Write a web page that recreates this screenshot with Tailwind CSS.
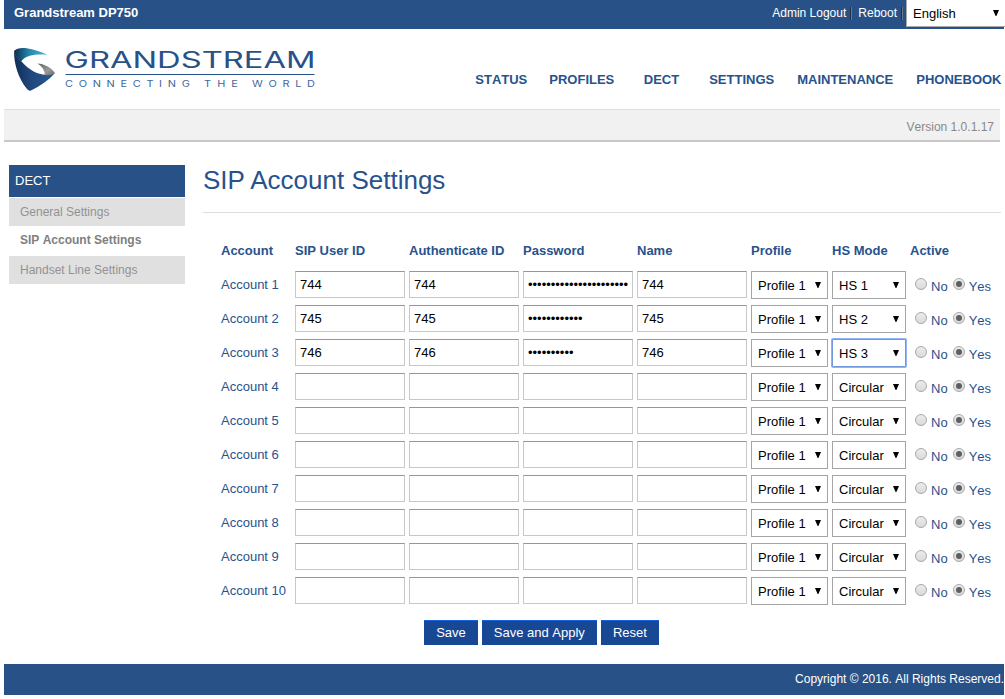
<!DOCTYPE html>
<html lang="en">
<head>
  <meta charset="UTF-8">
  <meta name="viewport" content="width=device-width, initial-scale=1.0">
  <title>Grandstream DP750</title>
  <script src="https://cdn.jsdelivr.net/npm/@tailwindcss/browser@4"></script>
</head>
<body class="bg-white font-['Liberation_Sans',Arial,sans-serif] [font-kerning:none] text-[13px] leading-4 text-[#28528c] overflow-hidden">
  <div class="ml-1 w-[1001px]">

    <!-- top bar -->
    <div class="bg-[#285287] text-white h-[29px] w-[1000px] flex items-start">
      <b class="ml-[10px] mt-[5px]">Grandstream DP750</b>
      <div class="ml-auto flex text-xs mt-[5px]">
        <a href="#">Admin Logout</a>
        <span class="w-[2px] h-[13px] mt-[2px] ml-1 mr-[6px] bg-[#22303f] border-r border-[#6f7780]"></span>
        <a href="#">Reboot</a>
        <span class="w-[2px] h-[13px] mt-[2px] ml-1 mr-[3px] bg-[#22303f] border-r border-[#6f7780]"></span>
      </div>
      <div class="relative shrink-0 w-[100px] h-[27px] -mr-[2px]">
        <select class="appearance-none block w-full h-full bg-white text-black border border-t-0 border-[#a9a9a9] pl-[6px] pt-px pb-0">
          <option>English</option>
        </select>
        <svg class="absolute right-[7px] top-[10px] w-[6px] h-[6px]" viewBox="0 0 6 6"><path d="M0 0h6L3.400 6H2.600z"/></svg>
      </div>
    </div>

    <!-- logo + menu -->
    <div class="h-20 flex items-start">
      <svg class="ml-[10px] mt-[17px] shrink-0" width="304" height="48" viewBox="14 46 304 48">
        <defs>
          <linearGradient id="top" x1="0" x2="1" y1="0" y2="0">
            <stop offset="0" stop-color="#0b2a4c"/><stop offset=".45" stop-color="#2787ae"/><stop offset="1" stop-color="#4ab4d8"/>
          </linearGradient>
          <linearGradient id="low" x1="0" x2="1" y1="0" y2="0">
            <stop offset="0" stop-color="#112e57"/><stop offset=".4" stop-color="#20477b"/><stop offset="1" stop-color="#285a94"/>
          </linearGradient>
          <linearGradient id="grey" x1="0" x2="1" y1="0" y2="1">
            <stop offset="0" stop-color="#5f5f5f"/><stop offset=".6" stop-color="#9b9b9b"/><stop offset="1" stop-color="#666"/>
          </linearGradient>
        </defs>
        <path fill="url(#low)" d="M14 51C15.500 56 18 59 22 62C31 72 43 78 55 73C48 81 40 86 31 90.500Q29 91.500 27 89C18 78 14 64 14 51Z"/>
        <path fill="url(#top)" d="M14 51C17 47 25 47.500 31 49C37 50.500 42 52 47.500 54.700C37 54 25 54.500 21 62C17 58 14.500 55 14 51Z"/>
        <path fill="url(#grey)" d="M37.500 63.500C44 64 51 67 55 73C52 75 49 75.500 45 75C44.500 70 42 66 37.500 63.500Z"/>
        <g fill="#285287" font-family="Inter, sans-serif">
          <text x="64.500" y="68.200" font-size="22.500" textLength="251" lengthAdjust="spacingAndGlyphs">GRANDSTREAM</text>
          <path d="M65.500 74h249v1h-249z"/>
          <g font-size="8.400" fill="#3f679c" transform="scale(1.300 1)">
            <text x="50" y="87" textLength="96">CONNECTING</text>
            <text x="157" y="87" textLength="26">THE</text>
            <text x="193.800" y="87" textLength="48.500">WORLD</text>
          </g>
        </g>
      </svg>
      <nav class="ml-auto mt-[43px] flex font-bold">
        <a href="#" class="mr-[22px]">STATUS</a>
        <a href="#" class="mr-[29.500px]">PROFILES</a>
        <a href="#" class="mr-[30px]">DECT</a>
        <a href="#" class="mr-[23px]">SETTINGS</a>
        <a href="#" class="mr-[23px]">MAINTENANCE</a>
        <a href="#" class="mr-[3.500px]">PHONEBOOK</a>
      </nav>
    </div>

    <div class="w-[996px] h-[33px] bg-[#f1f1f1] border-t border-b-2 border-t-[#dedede] border-b-[#c8c8c8] text-[#888] text-xs leading-4 text-right pt-[9px] pr-[6px]">Version 1.0.1.17</div>

    <div class="flex pl-[5px] h-[522px]">
      <!-- side menu -->
      <div class="w-44 mt-[23px] mr-[18px] shrink-0 text-xs">
        <div class="bg-[#285287] text-white text-[13px] h-8 leading-8 pl-[6px]">DECT</div>
        <a href="#" class="block mt-px bg-[#e0e0e0] text-[#929292] h-7 leading-7 pl-[11px]">General Settings</a>
        <a href="#" class="block font-bold text-[#808080] h-[30px] leading-7 pl-[11px]">SIP Account Settings</a>
        <a href="#" class="block bg-[#e0e0e0] text-[#929292] h-7 leading-7 pl-[11px]">Handset Line Settings</a>
      </div>

      <!-- content -->
      <div class="w-[798px] shrink-0">
        <h1 class="[font-kerning:normal] text-[26px] leading-8 pt-[22px] h-[71px] border-b border-[#dedede]">SIP Account Settings</h1>
        <div class="ml-[18px] mt-[30px] grid grid-cols-[70px_110px_110px_110px_110px_77px_74px_91px] gap-x-1 font-bold h-[28px]">
          <span>Account</span><span>SIP User ID</span><span>Authenticate ID</span><span>Password</span>
          <span>Name</span><span>Profile</span><span>HS Mode</span><span>Active</span>
        </div>
        <form>
          <div id="rows" class="ml-[18px]"></div>
          <div class="flex justify-center gap-1 mt-[9px] pr-[121px] text-white">
            <button type="button" class="bg-[#184793] border-t border-[#1563dc] h-[25px] px-3">Save</button>
            <button type="button" class="bg-[#184793] border-t border-[#1563dc] h-[25px] px-3">Save and Apply</button>
            <button type="button" class="bg-[#184793] border-t border-[#1563dc] h-[25px] px-3">Reset</button>
          </div>
        </form>
      </div>
    </div>

    <div class="w-[1000px] h-[31px] bg-[#285287] text-white text-xs leading-[30px] text-right">Copyright © 2016. All Rights Reserved.</div>
  </div>

  <script>
    const accounts = [
      { id: '744', pass: 22, mode: 'HS 1' },
      { id: '745', pass: 12, mode: 'HS 2' },
      { id: '746', pass: 10, mode: 'HS 3', focus: true },
    ];
    while (accounts.length < 10) accounts.push({ id: '', pass: 0, mode: 'Circular' });

    const input = (type, value) =>
      `<input type="${type}" value="${value}" class="block w-full h-[27px] bg-white text-black border border-[#c8c8c8] border-t-[#969696] px-1">`;

    const select = (value, focus) => `
      <div class="relative h-7">
        <select class="appearance-none block w-full h-full bg-white text-black border pl-[6px] pt-px ${focus ? 'border-[#7098dc] ring-1 ring-[#8fb4f5] rounded-[1px]' : 'border-[#a5a5a5]'}"><option>${value}</option></select>
        <svg class="absolute right-[7px] top-[11px] w-[6px] h-[6px]" viewBox="0 0 6 6"><path d="M0 0h6L3.400 6H2.600z"/></svg>
      </div>`;

    const radio = (on) => `
      <span class="mt-[7px] size-3 rounded-full border border-[#a8a8a8] bg-linear-to-b from-[#ececec] to-[#dadada] flex items-center justify-center">
        ${on ? '<i class="size-[6px] rounded-full bg-[#5f5f5f]"></i>' : ''}
      </span>`;

    document.getElementById('rows').innerHTML = accounts.map((a, i) => `
      <div class="grid grid-cols-[70px_110px_110px_110px_110px_77px_74px_91px] gap-x-1 h-[34px]">
        <span class="pt-[6px]">Account ${i + 1}</span>
        ${input('text', a.id)}
        ${input('text', a.id)}
        ${input('password', 'x'.repeat(a.pass))}
        ${input('text', a.id)}
        ${select('Profile 1')}
        ${select(a.mode, a.focus)}
        <div class="flex pl-[5px]">
          ${radio(false)}<span class="ml-1 mr-[5px] mt-2">No</span>
          ${radio(true)}<span class="ml-[4px] mt-2">Yes</span>
        </div>
      </div>`).join('');
  </script>
</body>
</html>
